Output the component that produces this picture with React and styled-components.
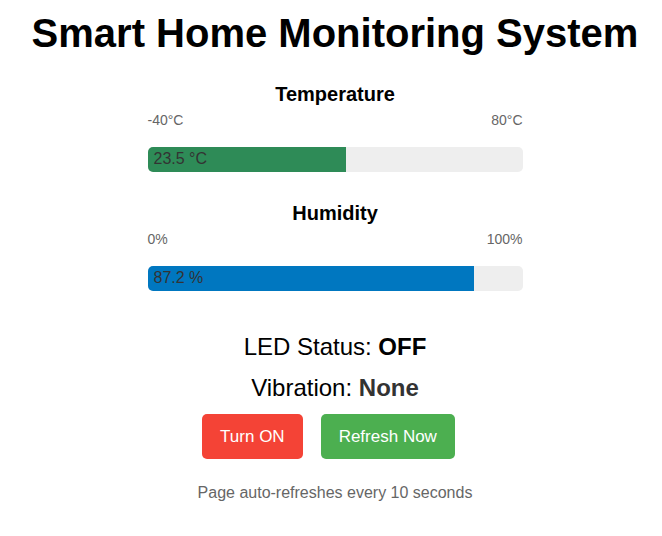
import React from "react";
import styled, { createGlobalStyle } from "styled-components";

const GlobalStyle = createGlobalStyle`
  body {
    margin: 0;
    background: #fff;
    color: #000;
    font-family: "Liberation Sans", Arial, sans-serif;
    font-size: 16px;
  }
`;

const Page = styled.main`
  display: flex;
  flex-direction: column;
  align-items: center;
  padding: 8px 8px 32px 16px;
  text-align: center;
`;

const Title = styled.h1`
  margin: 0 0 24px;
  font-size: 40px;
  line-height: 50px;
`;

const Gauge = styled.section`
  width: 375px;
  max-width: 100%;
  margin-bottom: 29px;
`;

const GaugeTitle = styled.h2`
  margin: 0 0 5px;
  font-size: 20px;
  line-height: 24px;
`;

const Scale = styled.div`
  display: flex;
  justify-content: space-between;
  margin-bottom: 18px;
  color: #666;
  font-size: 14px;
  line-height: 18px;
`;

const Track = styled.div`
  height: 25px;
  overflow: hidden;
  border-radius: 5px;
  background: #eee;
`;

const Fill = styled.div`
  box-sizing: border-box;
  height: 100%;
  padding-left: 6px;
  background: ${({ $color }) => $color};
  color: #333;
  line-height: 24px;
  text-align: left;
  white-space: nowrap;
`;

const Statuses = styled.div`
  display: flex;
  flex-direction: column;
  gap: 13px;
  padding: 13px 0 12px;
`;

const Status = styled.p`
  margin: 0;
  font-size: 24px;
  line-height: 28px;
`;

const StatusValue = styled.strong`
  color: ${({ $color }) => $color};
`;

const Actions = styled.div`
  display: flex;
  gap: 18px;
  margin-right: 13px;
`;

const Button = styled.button`
  height: 45px;
  padding: 0 18px;
  border: 0;
  border-radius: 5px;
  background: ${({ $color }) => $color};
  color: #fff;
  font-family: inherit;
  font-size: 17px;
  cursor: pointer;
`;

const Note = styled.p`
  margin: 24px 0 0;
  color: #666;
  line-height: 20px;
`;

const gauges = [
  { name: "Temperature", low: "-40°C", high: "80°C", text: "23.5 °C", percent: 52.9, color: "#2e8b57" },
  { name: "Humidity", low: "0%", high: "100%", text: "87.2 %", percent: 87.2, color: "#0077c0" },
];

export default function App() {
  return (
    <>
      <GlobalStyle />
      <Page>
        <Title>Smart Home Monitoring System</Title>
        {gauges.map((g) => (
          <Gauge key={g.name}>
            <GaugeTitle>{g.name}</GaugeTitle>
            <Scale>
              <span>{g.low}</span>
              <span>{g.high}</span>
            </Scale>
            <Track>
              <Fill $color={g.color} style={{ width: `${g.percent}%` }}>{g.text}</Fill>
            </Track>
          </Gauge>
        ))}
        <Statuses>
          <Status>LED Status: <StatusValue $color="#000">OFF</StatusValue></Status>
          <Status>Vibration: <StatusValue $color="#333">None</StatusValue></Status>
        </Statuses>
        <Actions>
          <Button type="button" $color="#f44336">Turn ON</Button>
          <Button type="button" $color="#4caf50">Refresh Now</Button>
        </Actions>
        <Note>Page auto-refreshes every 10 seconds</Note>
      </Page>
    </>
  );
}
